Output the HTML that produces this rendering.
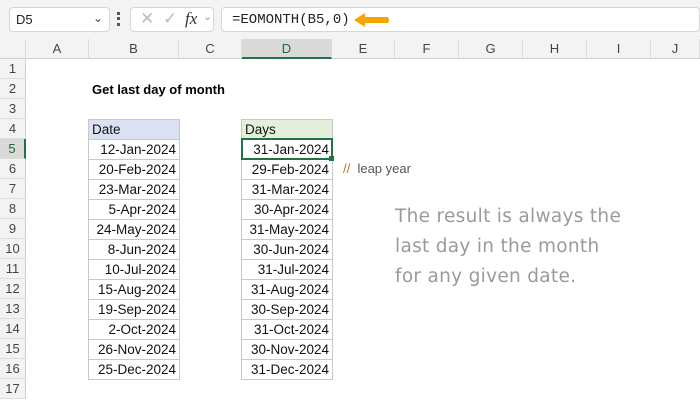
<!DOCTYPE html><html><head><style>
*{margin:0;padding:0;box-sizing:border-box}
body{width:700px;height:400px;overflow:hidden;background:#fff;font-family:"Liberation Sans",Calibri,sans-serif;position:relative}
.a{position:absolute}
.top{left:0;top:0;width:700px;height:39px;background:#f3f3f3}
.box{background:#fff;border:1px solid #d6d6d6;border-radius:4px}
.ch{top:39px;height:20px;background:#f3f3f3;border-right:1px solid #dcdcdc;border-bottom:1px solid #d0d0d0;font-size:13px;color:#444;text-align:center;line-height:19px}
.rh{left:0;width:26px;height:20px;background:#f3f3f3;border-bottom:1px solid #dcdcdc;border-right:1px solid #d0d0d0;font-size:13px;color:#444;text-align:center;line-height:20px}
.c{height:21px;border:1px solid #c8c8c8;font-size:13.5px;line-height:19px;text-align:right;padding-right:3px;color:#111}
.hand{font-family:"Comic Sans MS","DejaVu Sans",sans-serif;color:#9a9a9a;font-size:18.5px;left:395px;letter-spacing:.3px}
</style></head><body>
<div class="a top"></div>
<div class="a box" style="left:9px;top:7px;width:101px;height:25px"><span class="a" style="left:6px;top:4px;font-size:13px;color:#222">D5</span><span class="a" style="left:83px;top:3px;font-size:12px;color:#444">&#8964;</span></div>
<div class="a" style="left:117px;top:12px;width:3px;height:14px;border-left:3px dotted #555"></div>
<div class="a box" style="left:130px;top:7px;width:84px;height:25px;color:#bbb;font-size:17px"><span class="a" style="left:9px;top:1px">&#10005;</span><span class="a" style="left:32px;top:1px">&#10003;</span><span class="a" style="left:54px;top:1px;color:#333;font-family:'Liberation Serif';font-style:italic;font-size:17px">fx</span><span class="a" style="left:72px;top:2px;font-size:11px;color:#999">&#8964;</span></div>
<div class="a box" style="left:221px;top:7px;width:479px;height:25px"><span class="a" style="left:10px;top:4px;font-family:'Liberation Mono',monospace;font-size:14px;color:#222">=EOMONTH(B5,0)</span>
<svg class="a" style="left:130px;top:4px" width="40" height="16"><path d="M2 8 L13 1 L13 5 L36 5 Q38 8 36 11 L13 11 L13 15 Z" fill="#f5a500"/></svg></div>
<div class="a ch" style="left:0;width:26px"></div>
<div class="a ch" style="left:26px;width:63px">A</div>
<div class="a ch" style="left:89px;width:90px">B</div>
<div class="a ch" style="left:179px;width:63px">C</div>
<div class="a ch" style="left:242px;width:90px;background:#d9d9d9;color:#1d6b3a;border-bottom:2px solid #217346">D</div>
<div class="a ch" style="left:332px;width:63px">E</div>
<div class="a ch" style="left:395px;width:64px">F</div>
<div class="a ch" style="left:459px;width:64px">G</div>
<div class="a ch" style="left:523px;width:64px">H</div>
<div class="a ch" style="left:587px;width:64px">I</div>
<div class="a ch" style="left:651px;width:49px">J</div>
<div class="a rh" style="top:59px">1</div><div class="a rh" style="top:79px">2</div><div class="a rh" style="top:99px">3</div><div class="a rh" style="top:119px">4</div>
<div class="a rh" style="top:139px;background:#d9d9d9;color:#1d6b3a;border-right:2px solid #217346">5</div>
<div class="a rh" style="top:159px">6</div><div class="a rh" style="top:179px">7</div><div class="a rh" style="top:199px">8</div><div class="a rh" style="top:219px">9</div><div class="a rh" style="top:239px">10</div><div class="a rh" style="top:259px">11</div><div class="a rh" style="top:279px">12</div><div class="a rh" style="top:299px">13</div><div class="a rh" style="top:319px">14</div><div class="a rh" style="top:339px">15</div><div class="a rh" style="top:359px">16</div><div class="a rh" style="top:379px">17</div>
<div class="a" style="left:92px;top:82px;font-size:13px;font-weight:bold">Get last day of month</div>
<div class="a c" style="left:88px;top:119px;width:92px;background:#d9e1f2;text-align:left;padding-left:3px">Date</div>
<div class="a c" style="left:241px;top:119px;width:92px;background:#e2efda;text-align:left;padding-left:3px">Days</div>
<div class="a c" style="left:88px;top:139px;width:92px">12-Jan-2024</div>
<div class="a c" style="left:88px;top:159px;width:92px">20-Feb-2024</div>
<div class="a c" style="left:88px;top:179px;width:92px">23-Mar-2024</div>
<div class="a c" style="left:88px;top:199px;width:92px">5-Apr-2024</div>
<div class="a c" style="left:88px;top:219px;width:92px">24-May-2024</div>
<div class="a c" style="left:88px;top:239px;width:92px">8-Jun-2024</div>
<div class="a c" style="left:88px;top:259px;width:92px">10-Jul-2024</div>
<div class="a c" style="left:88px;top:279px;width:92px">15-Aug-2024</div>
<div class="a c" style="left:88px;top:299px;width:92px">19-Sep-2024</div>
<div class="a c" style="left:88px;top:319px;width:92px">2-Oct-2024</div>
<div class="a c" style="left:88px;top:339px;width:92px">26-Nov-2024</div>
<div class="a c" style="left:88px;top:359px;width:92px">25-Dec-2024</div>
<div class="a c" style="left:241px;top:139px;width:92px">31-Jan-2024</div>
<div class="a c" style="left:241px;top:159px;width:92px">29-Feb-2024</div>
<div class="a c" style="left:241px;top:179px;width:92px">31-Mar-2024</div>
<div class="a c" style="left:241px;top:199px;width:92px">30-Apr-2024</div>
<div class="a c" style="left:241px;top:219px;width:92px">31-May-2024</div>
<div class="a c" style="left:241px;top:239px;width:92px">30-Jun-2024</div>
<div class="a c" style="left:241px;top:259px;width:92px">31-Jul-2024</div>
<div class="a c" style="left:241px;top:279px;width:92px">31-Aug-2024</div>
<div class="a c" style="left:241px;top:299px;width:92px">30-Sep-2024</div>
<div class="a c" style="left:241px;top:319px;width:92px">31-Oct-2024</div>
<div class="a c" style="left:241px;top:339px;width:92px">30-Nov-2024</div>
<div class="a c" style="left:241px;top:359px;width:92px">31-Dec-2024</div>
<div class="a" style="left:241px;top:138px;width:92px;height:22px;border:2px solid #217346"></div>
<div class="a" style="left:329px;top:156px;width:5px;height:5px;background:#217346"></div>
<div class="a" style="left:343px;top:161px;font-size:13px;color:#555"><span style="color:#c07020">//</span>&nbsp; leap year</div>
<div class="a hand" style="top:206px">The result is always the</div>
<div class="a hand" style="top:236px">last day in the month</div>
<div class="a hand" style="top:266px">for any given date.</div>
</body></html>
